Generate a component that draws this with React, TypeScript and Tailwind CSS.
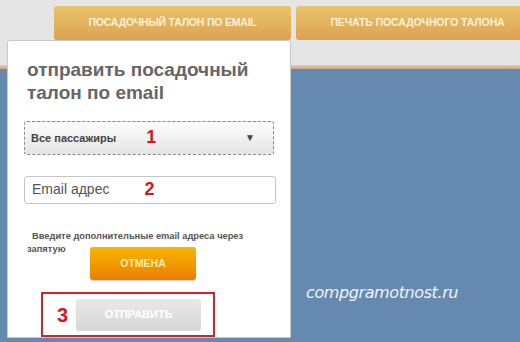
export default function App() {
  return (
    <div className="relative w-[520px] h-[342px] overflow-hidden flex flex-col bg-[#6689b0] font-['Liberation_Sans',Arial,sans-serif]">
      <header className="h-[65px] bg-[#e5e5e5] flex gap-[5px] pl-[54px] pt-[6px]">
        <button
          type="button"
          className="shrink-0 w-[237px] h-[34px] rounded-[3px] bg-gradient-to-b from-[#e9c46c] to-[#dca152] text-[#fbf0d6] text-[10.5px] font-bold uppercase tracking-[-0.2px]"
        >
          Посадочный талон по email
        </button>
        <button
          type="button"
          className="shrink-0 w-[243px] h-[34px] rounded-[3px] bg-gradient-to-b from-[#e9c46c] to-[#dca152] text-[#fbf0d6] text-[10.5px] font-bold uppercase tracking-[-0.1px]"
        >
          Печать посадочного талона
        </button>
      </header>
      <div className="h-[4px] bg-gradient-to-b from-[#f0c9a2] to-[#c9a38a]" />

      <main className="flex-1 flex items-end pb-[37px] pl-[306px]">
        <span className="text-[#eef2f6] italic text-[16px] font-['DejaVu_Sans',Verdana,sans-serif] tracking-[-0.4px]">
          compgramotnost.ru
        </span>
      </main>

      <section className="absolute left-[7px] top-[40px] w-[284px] h-[298px] bg-white border border-[#c9c9c9] rounded-t-[3px] flex flex-col pl-[16px] pr-[16px]">
        <h2 className="mt-[17px] ml-[3px] text-[#666] text-[19px] font-bold leading-[23px]">
          отправить посадочный
          <br />
          талон по email
        </h2>

        <div className="mt-[17px] w-[250px] h-[34px] border border-dashed border-[#888] rounded-[3px] bg-gradient-to-b from-[#fdfdfd] to-[#e4e4e4] flex items-center px-[6px] text-[11px] font-bold text-[#444]">
          <span>Все пассажиры</span>
          <span className="ml-[30px] text-[#d7141e] text-[18px] font-bold">1</span>
          <span className="ml-auto mr-[12px] text-[#444] text-[10px]">▼</span>
        </div>

        <div className="mt-[21px] w-[252px] h-[28px] border border-[#c5c5c5] rounded-[3px] flex items-center px-[7px] text-[14px] text-[#555]">
          <span>Email адрес</span>
          <span className="ml-[35px] text-[#d7141e] text-[18px] font-bold">2</span>
        </div>

        <p className="mt-[26px] ml-[3px] w-[245px] text-[9.3px] font-bold text-[#555] leading-[13px] indent-[5px]">
          Введите дополнительные email адреса через запятую
        </p>

        <button
          type="button"
          className="-mt-[9px] ml-[66px] w-[106px] h-[34px] rounded-[3px] bg-gradient-to-b from-[#f6b600] to-[#ec7d00] text-[#fbeab0] text-[10.5px] font-bold shadow-[0_1px_1px_rgba(0,0,0,0.2)]"
        >
          ОТМЕНА
        </button>

        <div className="mt-[12px] ml-[17px] w-[174px] h-[45px] border-2 border-[#d2232c] flex items-center pl-[14px]">
          <span className="text-[#d7141e] text-[20px] font-bold">3</span>
          <button
            type="button"
            className="ml-[8px] w-[125px] h-[32px] rounded-[3px] bg-gradient-to-b from-[#e9e9e9] to-[#d6d6d6] text-white text-[11px] font-bold"
          >
            ОТПРАВИТЬ
          </button>
        </div>
      </section>
    </div>
  );
}
